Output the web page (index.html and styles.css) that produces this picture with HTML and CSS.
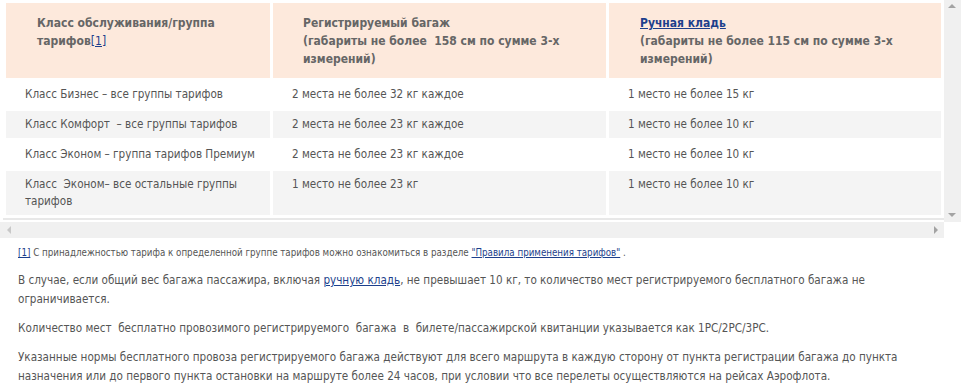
FILE: index.html
```html
<!DOCTYPE html>
<html lang="ru">
<head>
<meta charset="utf-8">
<link rel="stylesheet" href="styles.css">
</head>
<body>
<div class="scroller">
  <div class="scroll-top">
    <div class="viewport">
      <table class="baggage">
        <colgroup><col class="c1"><col class="c2"><col class="c3"></colgroup>
        <thead>
          <tr>
            <th>Класс обслуживания/группа тарифов<a href="#" class="ref">[1]</a></th>
            <th>Регистрируемый багаж<br>(габариты не более&nbsp; 158 см по сумме 3-х измерений)</th>
            <th><a href="#" class="hlink">Ручная кладь</a><br>(габариты не более 115 см по сумме 3-х измерений)</th>
          </tr>
        </thead>
        <tbody>
          <tr><td>Класс Бизнес – все группы тарифов</td><td>2 места не более 32 кг каждое</td><td>1 место не более 15 кг</td></tr>
          <tr class="alt"><td>Класс Комфорт&nbsp; – все группы тарифов</td><td>2 места не более 23 кг каждое</td><td>1 место не более 10 кг</td></tr>
          <tr><td>Класс Эконом – группа тарифов Премиум</td><td>2 места не более 23 кг каждое</td><td>1 место не более 10 кг</td></tr>
          <tr class="alt"><td>Класс&nbsp; Эконом– все остальные группы тарифов</td><td>1 место не более 23 кг</td><td>1 место не более 10 кг</td></tr>
        </tbody>
      </table>
      <div class="rule"></div>
    </div>
    <div class="vbar">
      <span class="arr up"></span>
      <span class="arr down"></span>
    </div>
  </div>
  <div class="hbar">
    <span class="arr left"></span>
    <span class="arr right"></span>
  </div>
</div>

<div class="content">
  <p class="note"><a href="#" class="ref">[1]</a> С принадлежностью тарифа к определенной группе тарифов можно ознакомиться в разделе <a href="#" class="ref">"Правила применения тарифов"</a> .</p>
  <p>В случае, если общий вес багажа пассажира, включая <a href="#" class="ref">ручную кладь</a>, не превышает 10 кг, то количество мест регистрируемого бесплатного багажа не ограничивается.</p>
  <p>Количество мест&nbsp; бесплатно провозимого регистрируемого&nbsp; багажа&nbsp; в&nbsp; билете/пассажирской квитанции указывается как 1PC/2PC/3PC.</p>
  <p>Указанные нормы бесплатного провоза регистрируемого багажа действуют для всего маршрута в каждую сторону от пункта регистрации багажа до пункта назначения или до первого пункта остановки на маршруте более 24 часов, при условии что все перелеты осуществляются на рейсах Аэрофлота.</p>
</div>
</body>
</html>
```
FILE: styles.css
```css
html, body {
  margin: 0;
  padding: 0;
  background: #fff;
}
body {
  font-family: "DejaVu Sans Condensed", "DejaVu Sans", sans-serif;
  font-size: 11.6px;
  color: #555;
}
.scroller {
  width: 961px;
  display: flex;
  flex-direction: column;
}
.scroll-top {
  display: flex;
  height: 222px;
}
.viewport {
  width: 944px;
  height: 222px;
  overflow: hidden;
  box-sizing: border-box;
  padding-left: 3px;
}
.baggage {
  border-collapse: separate;
  border-spacing: 3px;
  width: 941px;
  table-layout: fixed;
}
.c1 { width: 264px; }
.c2 { width: 333px; }
.c3 { width: 332px; }
.baggage th {
  background: #fde9dc;
  color: #666;
  font-size: 12px;
  font-weight: bold;
  text-align: left;
  vertical-align: top;
  line-height: 18px;
  padding: 11px 30px 10px 31px;
  height: 54px;
}
.baggage th:nth-child(2) { padding-left: 30px; }
.baggage td {
  vertical-align: top;
  line-height: 17px;
  padding: 5px 4px 5px 19px;
  color: #555;
}
.baggage tr.alt td { background: #f4f4f4; }
.ref {
  color: #1d3f8c;
  text-decoration: underline;
}
.baggage th .ref { font-weight: normal; }
.hlink {
  color: #1d3f8c;
  text-decoration: underline;
}
.rule {
  height: 2px;
  background: #e8e8e8;
}
.vbar {
  width: 17px;
  height: 222px;
  background: #f0f0f0;
  position: relative;
}
.hbar {
  width: 944px;
  height: 16px;
  background: #f0f0f0;
  position: relative;
}
.arr {
  position: absolute;
  width: 0;
  height: 0;
}
.arr.up {
  top: 4px; left: 4px;
  border-left: 4px solid transparent;
  border-right: 4px solid transparent;
  border-bottom: 4px solid #a3a3a3;
}
.arr.down {
  bottom: 5px; left: 4px;
  border-left: 4px solid transparent;
  border-right: 4px solid transparent;
  border-top: 4px solid #a3a3a3;
}
.arr.left {
  top: 4px; left: 7px;
  border-top: 4px solid transparent;
  border-bottom: 4px solid transparent;
  border-right: 4px solid #c8c8c8;
}
.arr.right {
  top: 4px; right: 6px;
  border-top: 4px solid transparent;
  border-bottom: 4px solid transparent;
  border-left: 4px solid #a3a3a3;
}
.content {
  padding: 0 18px;
}
.content p {
  margin: 10px 0 0;
  line-height: 19px;
}
.content p.note {
  font-size: 9.7px;
  margin-top: 7px;
  line-height: 16px;
}
```
